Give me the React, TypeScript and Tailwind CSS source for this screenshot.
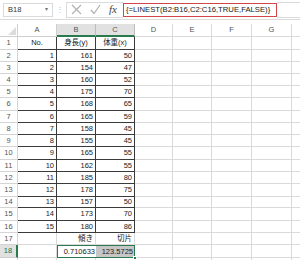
import React from "react";

type Row = { n: number; a: string; b: string; c: string; h: string };

const rows: Row[] = [
  { n: 1, a: "No.", b: "身長(y)", c: "体重(x)", h: "h-[13px]" },
  { n: 2, a: "1", b: "161", c: "50", h: "h-[12px]" },
  { n: 3, a: "2", b: "154", c: "47", h: "h-[12px]" },
  { n: 4, a: "3", b: "160", c: "52", h: "h-[12px]" },
  { n: 5, a: "4", b: "175", c: "70", h: "h-[12px]" },
  { n: 6, a: "5", b: "168", c: "65", h: "h-[13px]" },
  { n: 7, a: "6", b: "165", c: "59", h: "h-[12px]" },
  { n: 8, a: "7", b: "158", c: "45", h: "h-[12px]" },
  { n: 9, a: "8", b: "155", c: "45", h: "h-[12px]" },
  { n: 10, a: "9", b: "165", c: "55", h: "h-[13px]" },
  { n: 11, a: "10", b: "162", c: "55", h: "h-[12px]" },
  { n: 12, a: "11", b: "185", c: "80", h: "h-[12px]" },
  { n: 13, a: "12", b: "178", c: "75", h: "h-[13px]" },
  { n: 14, a: "13", b: "157", c: "50", h: "h-[11px]" },
  { n: 15, a: "14", b: "173", c: "70", h: "h-[13px]" },
  { n: 16, a: "15", b: "180", c: "86", h: "h-[12px]" },
  { n: 17, a: "", b: "傾き", c: "切片", h: "h-[12px]" },
];

const font = { fontFamily: '"Liberation Sans", "Noto Sans CJK JP", sans-serif' };

function EmptyCols() {
  return (
    <>
      <div className="w-[38px] border-r border-b border-[#dadada]" />
      <div className="w-[39px] border-r border-b border-[#dadada]" />
      <div className="w-[40px] border-r border-b border-[#dadada]" />
      <div className="w-[40px] border-r border-b border-[#dadada]" />
      <div className="flex-1 border-b border-[#dadada]" />
    </>
  );
}

export default function App() {
  return (
    <div className="w-[300px] h-[260px] bg-white overflow-hidden text-[7.5px] text-[#222]" style={font}>
      {/* formula bar */}
      <div className="h-[20px] flex items-center border-b border-[#dadada]">
        <div className="ml-[3px] w-[50px] h-[14px] border border-[#dadada] flex items-center justify-between px-[4px] text-[#333]">
          <span>B18</span>
          <span className="text-[6px] text-[#777]">▾</span>
        </div>
        <div className="w-[13px] text-center text-[#bbb]">⋮</div>
        <div className="w-[57px] h-[16px] flex items-center pl-[4px] border border-[#dadada] border-r-0">
          <svg width="11" height="11" viewBox="0 0 11 11" className="mr-[8px]">
            <path d="M1 1 L10 10 M10 1 L1 10" stroke="#b0b0b0" strokeWidth="1.2" fill="none" />
          </svg>
          <svg width="11" height="11" viewBox="0 0 11 11" className="mr-[8px]">
            <path d="M1 6 L4 9.5 L10 1" stroke="#b0b0b0" strokeWidth="1.2" fill="none" />
          </svg>
          <span className="text-[11px] leading-none text-[#444] italic" style={{ fontFamily: '"Liberation Serif", serif' }}>
            fx
          </span>
        </div>
        <div className="w-[154px] h-[14px] border border-[#d0464b] flex items-center pl-[2px] text-[7.7px] text-[#222] whitespace-nowrap overflow-hidden">
          {"{=LINEST(B2:B16,C2:C16,TRUE,FALSE)}"}
        </div>
        <div className="flex-1 h-[16px] border-y border-[#dadada]" />
      </div>
      <div className="h-[4px]" />
      {/* column headers */}
      <div className="flex h-[13px] text-[#555]">
        <div className="w-[18px] border-r border-b border-[#cfcfcf] flex items-end justify-end p-[1px]">
          <svg width="8" height="8" viewBox="0 0 8 8">
            <path d="M8 0 L8 8 L0 8 Z" fill="#dcdcdc" />
          </svg>
        </div>
        <div className="w-[39px] flex items-center justify-center border-r border-b border-[#cfcfcf]">A</div>
        <div className="w-[39px] flex items-center justify-center bg-[#e1e1e1] border-r border-[#bdbdbd] border-b-2 border-b-[#2a7a50]">B</div>
        <div className="w-[39px] flex items-center justify-center bg-[#e1e1e1] border-r border-[#bdbdbd] border-b-2 border-b-[#2a7a50]">C</div>
        <div className="w-[38px] flex items-center justify-center border-r border-b border-[#dadada]">D</div>
        <div className="w-[39px] flex items-center justify-center border-r border-b border-[#dadada]">E</div>
        <div className="w-[40px] flex items-center justify-center border-r border-b border-[#dadada]">F</div>
        <div className="w-[40px] flex items-center justify-center border-r border-b border-[#dadada]">G</div>
        <div className="flex-1 border-b border-[#dadada]" />
      </div>
      {rows.map((r) => {
        const boxed = r.n <= 16;
        const center = r.n === 1;
        const cell = boxed
          ? "border-r border-b border-[#3a3a3a]"
          : "border-r border-b border-[#dadada]";
        const align = center ? "justify-center" : "justify-end pr-[2px]";
        return (
          <div key={r.n} className={`flex ${r.h}`}>
            <div className="w-[18px] flex items-center justify-center text-[#555] border-r border-b border-[#d4d4d4]">
              {r.n}
            </div>
            <div className={`w-[39px] flex items-center ${align} ${cell}`}>{r.a}</div>
            <div className={`w-[39px] flex items-center ${align} ${cell}`}>{r.b}</div>
            <div className={`w-[39px] flex items-center ${align} ${cell}`}>{r.c}</div>
            <EmptyCols />
          </div>
        );
      })}
      {/* row 18 selected */}
      <div className="flex h-[13px]">
        <div className="w-[18px] flex items-center justify-center bg-[#e1e1e1] text-[#217346] border-r-2 border-r-[#2a7a50] border-b border-b-[#cfcfcf]">
          18
        </div>
        <div className="w-[39px] border-r border-b border-[#dadada]" />
        <div className="w-[78px] flex border border-[#2a7a50] relative">
          <div className="w-[38px] flex items-center justify-end pr-[1px] bg-white">0.710633</div>
          <div className="flex-1 flex items-center justify-end pr-[1px] bg-[#c6c6c6]">123.5725</div>
          <div className="absolute right-[-3px] bottom-[-3px] w-[4px] h-[4px] bg-[#2a7a50] border border-white" />
        </div>
        <EmptyCols />
      </div>
      <div className="flex h-[4px]">
        <div className="w-[18px] border-r border-[#d4d4d4]" />
        <div className="w-[39px] border-r border-[#dadada]" />
        <div className="w-[39px] border-r border-[#dadada]" />
        <div className="w-[39px] border-r border-[#dadada]" />
        <div className="w-[38px] border-r border-[#dadada]" />
        <div className="w-[39px] border-r border-[#dadada]" />
        <div className="w-[40px] border-r border-[#dadada]" />
        <div className="w-[40px] border-r border-[#dadada]" />
      </div>
    </div>
  );
}
